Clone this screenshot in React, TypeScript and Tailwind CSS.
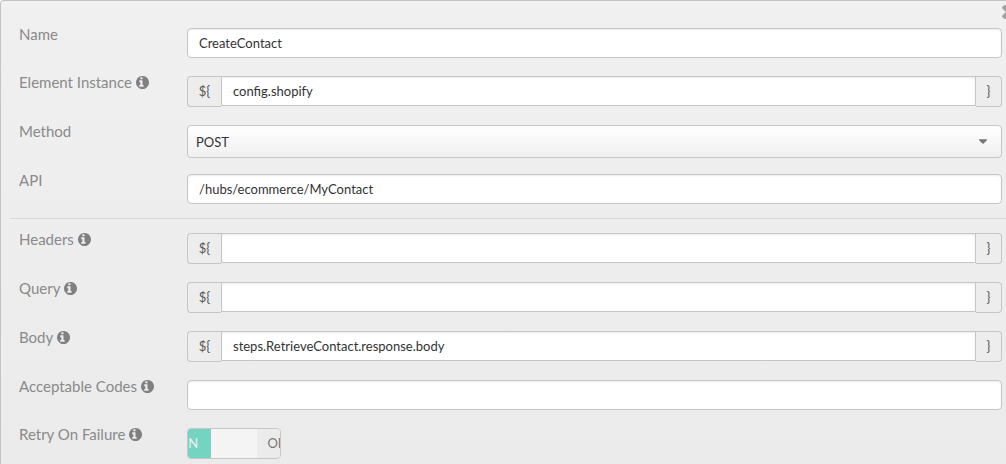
import { useState } from "react";
import type { ReactNode } from "react";
import { FaCaretDown } from "react-icons/fa";

const boxClass =
  "block w-full border border-[#c6c6c6] bg-white px-[11px] text-[13px] text-[#333] shadow-[inset_0_1px_2px_rgba(0,0,0,0.08)] outline-none";

function InfoIcon() {
  return (
    <svg viewBox="128 128 1536 1536" fill="currentColor" aria-hidden="true" className="size-[13px] text-[#808080]">
      <path d="M1024 1376v-160q0-14-9-23t-23-9h-96v-512q0-14-9-23t-23-9h-320q-14 0-23 9t-9 23v160q0 14 9 23t23 9h96v320h-96q-14 0-23 9t-9 23v160q0 14 9 23t23 9h448q14 0 23-9t9-23zM896 480v-160q0-14-9-23t-23-9h-192q-14 0-23 9t-9 23v160q0 14 9 23t23 9h192q14 0 23-9t9-23zM1664 896q0 209-103 385.500t-279.500 279.500-385.500 103-385.500-103-279.500-279.500-103-385.500 103-385.500 279.500-279.500 385.500-103 385.500 103 279.500 279.500 103 385.500z" />
    </svg>
  );
}

function CloseIcon() {
  return (
    <svg viewBox="302 366 1188 1188" fill="currentColor" aria-hidden="true" className="size-3.5">
      <path d="M1490 1322q0 40-28 68l-136 136q-28 28-68 28t-68-28l-294-294-294 294q-28 28-68 28t-68-28l-136-136q-28-28-28-68t28-68l294-294-294-294q-28-28-28-68t28-68l136-136q28-28 68-28t68 28l294 294 294-294q28-28 68-28t68 28l136 136q28 28 28 68t-28 68l-294 294 294 294q28 28 28 68z" />
    </svg>
  );
}

type RowProps = {
  id: string;
  label: string;
  info?: boolean;
  className?: string;
  children: ReactNode;
};

function Row({ id, label, info, className = "h-[49px]", children }: RowProps) {
  return (
    <div className={`flex items-start pr-1 ${className}`}>
      <label
        htmlFor={id}
        className="flex w-[168px] shrink-0 items-center gap-1 text-[15px] leading-5 text-[#8a8a8a]"
      >
        {label}
        {info && <InfoIcon />}
      </label>
      <div className="min-w-0 flex-1 pt-1">{children}</div>
    </div>
  );
}

function Expression({ id, initial = "" }: { id: string; initial?: string }) {
  const [value, setValue] = useState(initial);
  const addon =
    "flex h-[31px] shrink-0 items-center justify-center border border-[#c6c6c6] bg-[#ededed] text-[13px] text-[#555]";
  return (
    <div className="flex items-start">
      <span className={`${addon} w-[34px] rounded-l border-r-0`}>{"${"}</span>
      <input
        id={id}
        value={value}
        onChange={(e) => setValue(e.target.value)}
        className={`${boxClass} h-[30px] min-w-0 flex-1`}
      />
      <span className={`${addon} w-[26px] rounded-r border-l-0`}>{"}"}</span>
    </div>
  );
}

function TextBox({ id, initial = "" }: { id: string; initial?: string }) {
  const [value, setValue] = useState(initial);
  return (
    <input
      id={id}
      value={value}
      onChange={(e) => setValue(e.target.value)}
      className={`${boxClass} h-[30px] rounded`}
    />
  );
}

function Toggle({ id }: { id: string }) {
  return (
    <button
      id={id}
      type="button"
      role="switch"
      aria-checked="mixed"
      className="flex h-[31px] w-[94px] justify-center overflow-hidden rounded border border-[#c6c6c6] text-[13px] leading-[28px]"
    >
      <span className="h-full w-[46px] shrink-0 bg-[#74d4c1] text-center text-[#f0f0f0]">ON</span>
      <span className="h-full w-[46px] shrink-0 bg-[#f4f4f4]" />
      <span className="h-full w-[46px] shrink-0 bg-[#ebebeb] text-center text-[#777]">OFF</span>
    </button>
  );
}

export default function App() {
  return (
    <div className="relative min-h-screen overflow-hidden rounded-tl border-t border-l border-[#c3c3c3] bg-linear-to-b from-[#f0f0f0] to-[#ebebeb] font-['Lato',sans-serif]">
      <button type="button" aria-label="Close" className="absolute top-1 -right-2.5 text-[#a3a3a3]">
        <CloseIcon />
      </button>
      <form className="pt-[23px]" onSubmit={(e) => e.preventDefault()}>
        <div className="pl-[18px]">
          <Row id="name" label="Name" className="h-12">
            <TextBox id="name" initial="CreateContact" />
          </Row>
          <Row id="instance" label="Element Instance" info>
            <Expression id="instance" initial="config.shopify" />
          </Row>
          <Row id="method" label="Method">
            <div className="relative">
              <select
                id="method"
                defaultValue="POST"
                className="block h-[33px] w-full appearance-none rounded border border-[#c6c6c6] bg-linear-to-b from-white to-[#f0f0f0] px-2 pt-0.5 text-[13px] text-[#333] outline-none"
              >
                <option>GET</option>
                <option>POST</option>
                <option>PUT</option>
                <option>PATCH</option>
                <option>DELETE</option>
              </select>
              <FaCaretDown size={14} className="pointer-events-none absolute top-[9px] right-3 text-[#777]" />
            </div>
          </Row>
          <Row id="api" label="API" className="h-12">
            <TextBox id="api" initial="/hubs/ecommerce/MyContact" />
          </Row>
        </div>
        <hr className="ml-[9px] border-[#d8d8d8]" />
        <div className="pt-[10px] pl-[18px]">
          <Row id="headers" label="Headers" info>
            <Expression id="headers" />
          </Row>
          <Row id="query" label="Query" info>
            <Expression id="query" />
          </Row>
          <Row id="body" label="Body" info>
            <Expression id="body" initial="steps.RetrieveContact.response.body" />
          </Row>
          <Row id="codes" label="Acceptable Codes" info className="h-12">
            <TextBox id="codes" />
          </Row>
          <Row id="retry" label="Retry On Failure" info className="h-9">
            <Toggle id="retry" />
          </Row>
        </div>
      </form>
    </div>
  );
}
